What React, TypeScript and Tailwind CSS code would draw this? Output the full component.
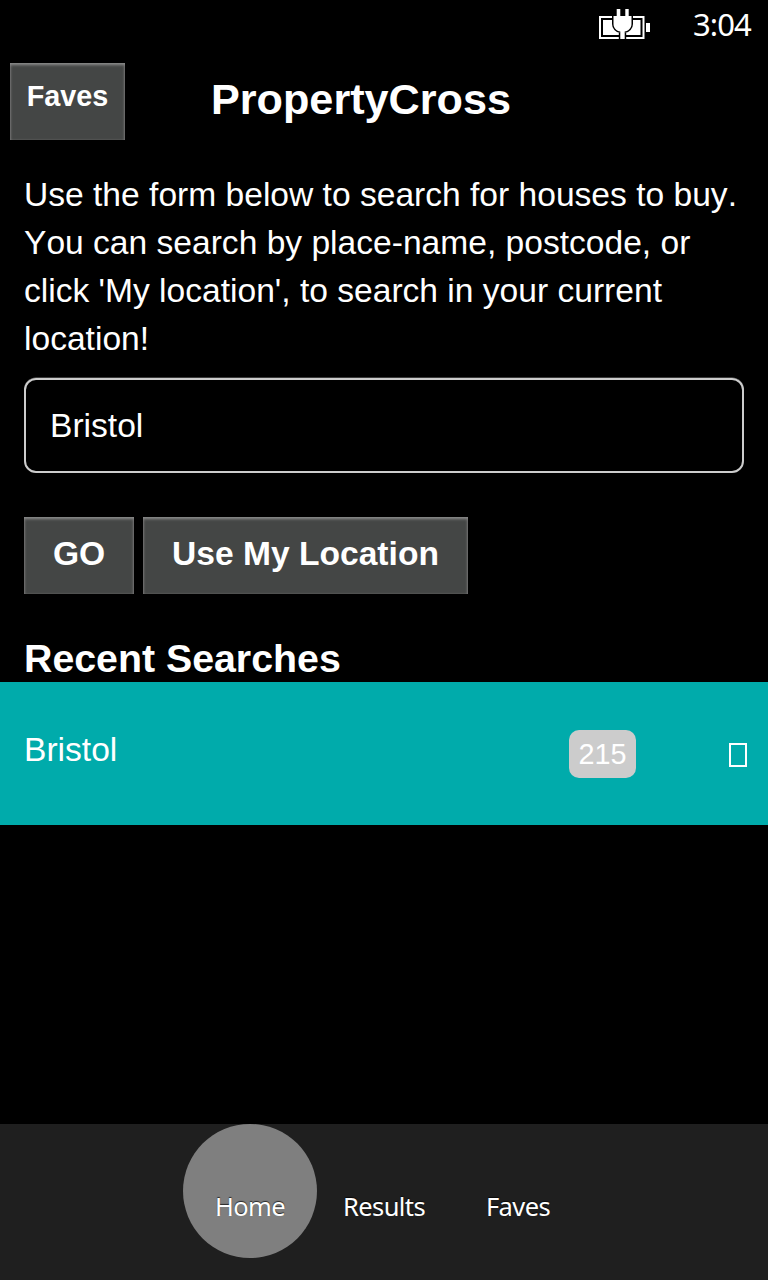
import React from "react";

const panelButton =
  "block bg-[#444645] font-bold text-white shadow-[inset_0_2px_3px_#8a8a8a,inset_1px_0_2px_#5c5c5c,inset_-1px_0_2px_#5c5c5c]";

function BatteryIcon() {
  return (
    <svg width="52" height="32" viewBox="0 0 52 32">
      <rect x="1" y="8" width="43.5" height="21" fill="none" stroke="#fff" strokeWidth="2" />
      <rect x="4" y="11" width="37.5" height="15" fill="#fff" />
      <rect x="47" y="14" width="4" height="9" fill="#fff" />
      <path
        d="M17.7 0H21.3V7H26.3V0H29.7V7H32.5V15C32.5 19 29.5 22 25.7 22.5V30H21.3V22.5C17.5 22 14.5 19 14.5 15V7H17.7Z"
        fill="#fff"
        stroke="#000"
        strokeWidth="3"
        paintOrder="stroke"
      />
    </svg>
  );
}

function Tab({ label, active = false }: { label: string; active?: boolean }) {
  return (
    <button
      className={
        "h-[134px] w-[134px] rounded-full pt-[29px] text-[25.5px] leading-10 tracking-[-0.6px] text-white [text-shadow:0_-1px_1px_#000000b0] " +
        (active ? "bg-[#7f7f7f]" : "")
      }
    >
      {label}
    </button>
  );
}

export default function App() {
  return (
    <div className="flex h-[1280px] w-[768px] flex-col overflow-hidden bg-black font-['Liberation_Sans',Arial,sans-serif] text-[33.6px] text-white">
      <div className="flex h-[63px] shrink-0 items-start justify-end pr-[16px] font-['Noto_Sans','Open_Sans',sans-serif]">
        <div className="mt-[9px] mr-[42px]">
          <BatteryIcon />
        </div>
        <span className="mt-1 w-[59px] text-[31px] leading-10 tracking-[-0.9px]">3:04</span>
      </div>
      <header className="flex h-[108px] shrink-0 items-start pl-[10px]">
        <button className={panelButton + " h-[77px] w-[115px] pb-[11px] text-[28.8px] leading-[66px]"}>Faves</button>
        <h1 className="ml-[86px] text-[43.2px] leading-[72px] font-bold">PropertyCross</h1>
      </header>
      <p className="h-[207px] shrink-0 px-6 leading-[48px] whitespace-nowrap [font-kerning:none]">
        Use the form below to search for houses to buy.
        <br />
        You can search by place-name, postcode, or
        <br />
        click 'My location', to search in your current
        <br />
        location!
      </p>
      <div className="mx-6 h-[95px] shrink-0 rounded-[12px] border-2 border-[#ccc] px-6 leading-[92px] shadow-[0_-0.5px_0_0_#777]">
        Bristol
      </div>
      <div className="mt-[44px] flex h-[77px] shrink-0 gap-[9px] pl-6">
        <button className={panelButton + " w-[110px] pb-1 leading-[73px]"}>GO</button>
        <button className={panelButton + " w-[325px] pb-1 leading-[73px]"}>Use My Location</button>
      </div>
      <h2 className="mt-[40px] h-12 shrink-0 pl-6 text-[39.3px] leading-[48px] font-bold">Recent Searches</h2>
      <div className="flex h-[143px] shrink-0 items-center bg-[#00abab] pr-[21px] pl-6">
        <span className="mb-[7px] flex-1">Bristol</span>
        <span className="h-12 w-[67px] rounded-[10px] bg-[#ccc] text-center text-[28.8px] leading-[48px]">215</span>
        <span className="mt-[2px] ml-[93px] h-6 w-[18px] border-2 border-white" />
      </div>
      <div className="flex-1" />
      <nav className="flex h-[156px] shrink-0 items-start bg-[#1f1f1f] pl-[183px] font-['Noto_Sans','Open_Sans',sans-serif]">
        <Tab label="Home" active />
        <Tab label="Results" />
        <Tab label="Faves" />
      </nav>
    </div>
  );
}
